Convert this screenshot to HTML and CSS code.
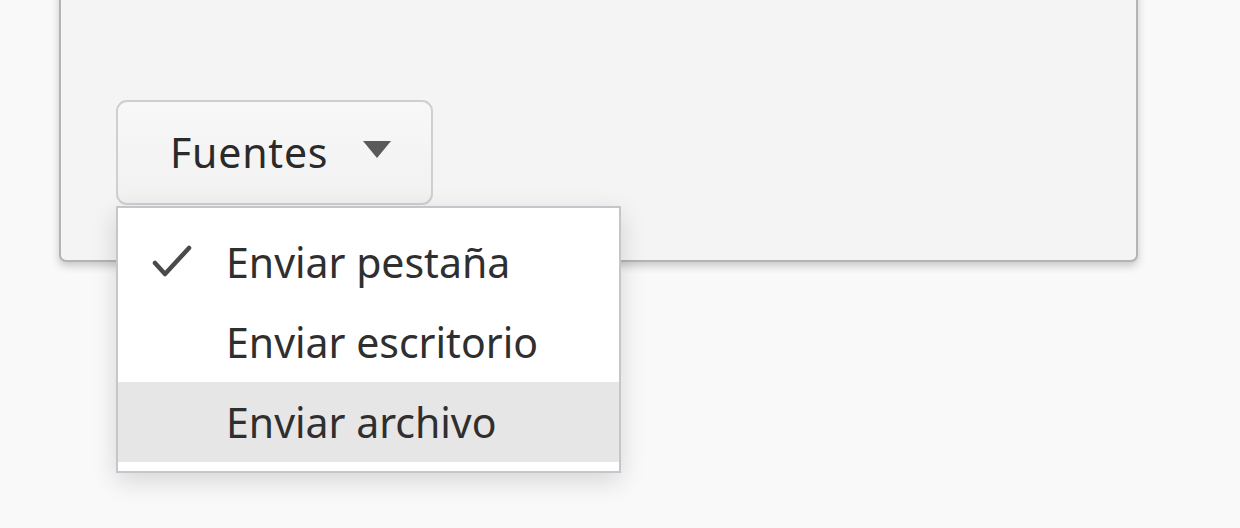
FILE: index.html
```html
<!DOCTYPE html>
<html lang="es">
<head>
    <meta charset="UTF-8">
    <title>Fuentes</title>
    <link rel="stylesheet" href="styles.css">
</head>
<body>
    <div class="panel">
        <button class="source-btn">
            <span class="label">Fuentes</span>
            <svg class="arrow" width="32" height="20" viewBox="0 0 32 20"><path d="M2 2 H30 L16 19 Z" fill="#5a5a5a"/></svg>
        </button>
    </div>

    <ul class="menu">
        <li class="item">
            <svg class="check" width="40" height="34" viewBox="0 0 40 34"><path d="M3 19 L13 30 L37 4" fill="none" stroke="#4a4a4a" stroke-width="4.5" stroke-linecap="round" stroke-linejoin="round"/></svg>
            <span>Enviar pestaña</span>
        </li>
        <li class="item"><span>Enviar escritorio</span></li>
        <li class="item active"><span>Enviar archivo</span></li>
    </ul>
</body>
</html>
```

FILE: styles.css
```css
body {
    margin: 0;
    background-color: #f9f9f9;
    font-family: "Noto Sans", "Open Sans", sans-serif;
    color: #2f2f2f;
    height: 528px;
    overflow: hidden;
}

.panel {
    box-sizing: border-box;
    margin-top: -12px;
    margin-left: 59px;
    width: 1079px;
    height: 274px;
    padding: 110px 0 0 55px;
    background-color: #f4f4f4;
    border: 2px solid #b4b4b4;
    border-radius: 0 0 7px 7px;
    box-shadow: 0 4px 8px rgba(0, 0, 0, 0.2);
}

.source-btn {
    box-sizing: border-box;
    width: 317px;
    height: 105px;
    display: flex;
    align-items: center;
    padding: 0 0 0 52px;
    gap: 33px;
    background: linear-gradient(#f8f8f8, #f1f1f1);
    border: 2px solid #cfcfcf;
    border-radius: 11px;
    font-family: inherit;
    font-size: 41px;
    color: #2a2a2a;
}

.label {
    letter-spacing: 0.8px;
    margin-top: -2px;
}

.arrow {
    margin-top: -8px;
}

.menu {
    position: absolute;
    left: 116px;
    top: 206px;
    box-sizing: border-box;
    width: 505px;
    height: 267px;
    margin: 0;
    padding: 14px 0 12px;
    list-style: none;
    background-color: #fff;
    border: 2px solid #c3c6ca;
    box-shadow: 0 8px 24px rgba(0, 0, 0, 0.14);
}

.item {
    position: relative;
    height: 80px;
    display: flex;
    align-items: center;
    padding-left: 108px;
    font-size: 41px;
    color: #2f2f2f;
}

.item.active {
    background-color: #e6e6e6;
}

.check {
    position: absolute;
    left: 34px;
    top: 22px;
}
```
